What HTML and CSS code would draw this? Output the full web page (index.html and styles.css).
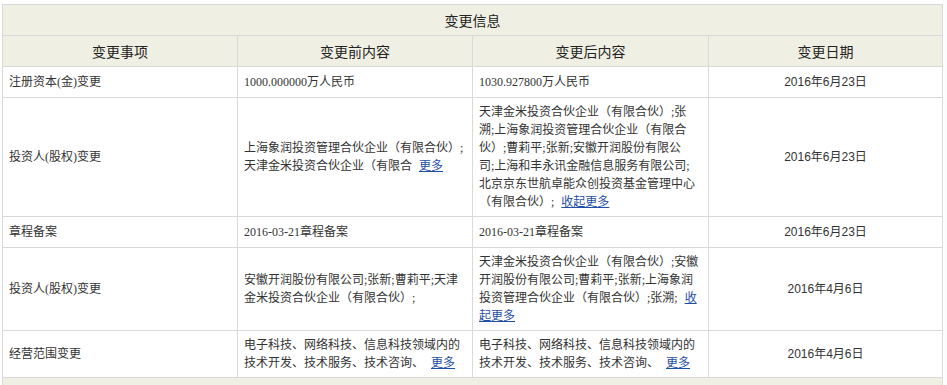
FILE: index.html
```html
<!DOCTYPE html>
<html lang="zh-CN">
<head>
<meta charset="utf-8">
<link rel="stylesheet" href="styles.css">
</head>
<body>
<div class="wrap">
<table class="change-table">
  <colgroup>
    <col class="c1"><col class="c2"><col class="c3"><col class="c4">
  </colgroup>
  <thead>
    <tr><th colspan="4" class="title">变更信息</th></tr>
    <tr class="head">
      <th>变更事项</th><th>变更前内容</th><th>变更后内容</th><th>变更日期</th>
    </tr>
  </thead>
  <tbody>
    <tr class="single">
      <td class="item">注册资本(金)变更</td>
      <td class="txt">1000.000000万人民币</td>
      <td class="txt">1030.927800万人民币</td>
      <td class="date">2016年6月23日</td>
    </tr>
    <tr>
      <td class="item">投资人(股权)变更</td>
      <td class="txt">上海象润投资管理合伙企业（有限合伙）;<br>天津金米投资合伙企业（有限合 <a href="#" class="more">更多</a></td>
      <td class="txt top">天津金米投资合伙企业（有限合伙）;张<br>溯;上海象润投资管理合伙企业（有限合<br>伙）;曹莉平;张新;安徽开润股份有限公<br>司;上海和丰永讯金融信息服务有限公司;<br>北京京东世航卓能众创投资基金管理中心<br>（有限合伙）; <a href="#" class="more">收起更多</a></td>
      <td class="date">2016年6月23日</td>
    </tr>
    <tr class="single">
      <td class="item">章程备案</td>
      <td class="txt">2016-03-21章程备案</td>
      <td class="txt">2016-03-21章程备案</td>
      <td class="date">2016年6月23日</td>
    </tr>
    <tr>
      <td class="item">投资人(股权)变更</td>
      <td class="txt">安徽开润股份有限公司;张新;曹莉平;天津<br>金米投资合伙企业（有限合伙）;</td>
      <td class="txt top">天津金米投资合伙企业（有限合伙）;安徽<br>开润股份有限公司;曹莉平;张新;上海象润<br>投资管理合伙企业（有限合伙）;张溯; <a href="#" class="more">收<br>起更多</a></td>
      <td class="date">2016年4月6日</td>
    </tr>
    <tr>
      <td class="item">经营范围变更</td>
      <td class="txt">电子科技、网络科技、信息科技领域内的<br>技术开发、技术服务、技术咨询、 <a href="#" class="more">更多</a></td>
      <td class="txt">电子科技、网络科技、信息科技领域内的<br>技术开发、技术服务、技术咨询、 <a href="#" class="more">更多</a></td>
      <td class="date">2016年4月6日</td>
    </tr>
    <tr class="foot">
      <td colspan="4"></td>
    </tr>
  </tbody>
</table>
</div>
</body>
</html>
```
FILE: styles.css
```css
html, body {
  margin: 0;
  padding: 0;
  background: #ffffff;
}
.wrap {
  padding: 4px 0 0 2px;
}
.change-table {
  border-collapse: collapse;
  table-layout: fixed;
  width: 940px;
  font-family: "Liberation Serif", "Noto Sans CJK SC", serif;
  font-size: 12px;
  color: #333333;
}
.c1 { width: 235px; }
.c2 { width: 235px; }
.c3 { width: 236px; }
.c4 { width: 234px; }
.change-table th,
.change-table td {
  border: 1px solid #d9d9d9;
}
.change-table th {
  background: #f0efe3;
  font-size: 14px;
  font-weight: normal;
  color: #222222;
  height: 30px;
  padding: 0;
  text-align: center;
  vertical-align: middle;
}
.change-table td {
  padding: 5px 6px;
  line-height: 18px;
  vertical-align: middle;
  white-space: nowrap;
}
.single td {
  height: 20px;
}
.item {
  text-align: left;
}
.txt {
  text-align: left;
}
.top {
  vertical-align: top;
}
.date {
  text-align: center;
  font-family: "Liberation Sans", "Noto Sans CJK SC", sans-serif;
}
.more {
  color: #1f4ea6;
  text-decoration: underline;
  margin-left: 4px;
}
.foot td {
  background: #f0efe3;
  height: 30px;
}
```
